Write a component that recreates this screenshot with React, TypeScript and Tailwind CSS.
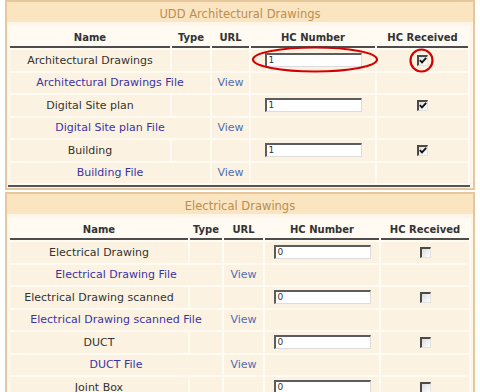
import React from "react"

interface DrawingRow {
  name: string
  file: string
  hc: string
  checked: boolean
}

const archRows: DrawingRow[] = [
  { name: "Architectural Drawings", file: "Architectural Drawings File", hc: "1", checked: true },
  { name: "Digital Site plan", file: "Digital Site plan File", hc: "1", checked: true },
  { name: "Building", file: "Building File", hc: "1", checked: true },
]

const elecRows: DrawingRow[] = [
  { name: "Electrical Drawing", file: "Electrical Drawing File", hc: "0", checked: false },
  { name: "Electrical Drawing scanned", file: "Electrical Drawing scanned File", hc: "0", checked: false },
  { name: "DUCT", file: "DUCT File", hc: "0", checked: false },
  { name: "Joint Box", file: "Joint Box File", hc: "0", checked: false },
]

function HcInput({ value }: { value: string }) {
  return (
    <div className="mx-auto w-[97px] h-[14px] bg-white border-t-2 border-l-2 border-r border-b border-t-[#5c5c5c] border-l-[#5c5c5c] border-r-[#dcdcdc] border-b-[#dcdcdc] text-[9px] leading-[11px] text-[#333] text-left pl-[2px]">
      {value}
    </div>
  )
}

function CheckBox({ checked }: { checked: boolean }) {
  return (
    <div className="mx-auto w-[11px] h-[11px] bg-gradient-to-br from-[#dcdcdc] to-white border-t-2 border-l-2 border-r border-b border-t-[#4a4a4a] border-l-[#4a4a4a] border-r-[#e2e2e2] border-b-[#e2e2e2] flex items-center justify-center">
      {checked && (
        <svg width="8" height="7" viewBox="0 0 8 7">
          <path d="M0.8 3.2 L3 5.4 L7.2 0.8" stroke="#111" strokeWidth="1.8" fill="none" />
        </svg>
      )}
    </div>
  )
}

function Panel({ title, rows, widths }: { title: string; rows: DrawingRow[]; widths: number[] }) {
  const th = "h-[20px] border-b-2 border-[#4d4d4d] font-bold text-[10px] text-[#333] text-center align-middle p-0"
  const td = "h-[20.5px] bg-[#fcf2e1] p-0 text-center align-middle"
  return (
    <div className="ml-[5px] w-[470px] border-2 border-[#e6c79c] bg-[#fdf5e8] pb-[1px]">
      <div className="h-[20px] bg-[#fbe4c0] pt-[6px] text-center text-[11.5px] leading-[12px] text-[#b98f55]">{title}</div>
      <table className="ml-[1px] mt-[4px] table-fixed border-separate border-spacing-[2px] bg-[#fffaf2] border-b-2 border-b-[#555] text-[11px] leading-[13px]" style={{ width: widths.reduce((a, b) => a + b, 0) + 12 }}>
        <colgroup>
          {widths.map((w, i) => (
            <col key={i} style={{ width: w }} />
          ))}
        </colgroup>
        <thead>
          <tr>
            <th className={th}>Name</th>
            <th className={th}>Type</th>
            <th className={th}>URL</th>
            <th className={th}>HC Number</th>
            <th className={th}>HC Received</th>
          </tr>
        </thead>
        <tbody>
          {rows.map((r) => (
            <React.Fragment key={r.name}>
              <tr>
                <td className={`${td} text-[#333]`}>{r.name}</td>
                <td className={td}></td>
                <td className={td}></td>
                <td className={td}>
                  <HcInput value={r.hc} />
                </td>
                <td className={td}>
                  <CheckBox checked={r.checked} />
                </td>
              </tr>
              <tr>
                <td colSpan={2} className={`${td} text-[#3b33a6]`}>{r.file}</td>
                <td className={`${td} text-[#4f6db3]`}>View</td>
                <td className={td}></td>
                <td className={td}></td>
              </tr>
            </React.Fragment>
          ))}
        </tbody>
      </table>
    </div>
  )
}

export default function App() {
  return (
    <div className="relative w-[480px] h-[392px] overflow-hidden bg-white font-['DejaVu_Sans',sans-serif]">
      <Panel title="UDD Architectural Drawings" rows={archRows} widths={[160, 38, 37, 124, 91]} />
      <div className="mt-[2px]">
        <Panel title="Electrical Drawings" rows={elecRows} widths={[178, 32, 39, 114, 88]} />
      </div>
      <svg className="absolute left-0 top-0 pointer-events-none" width="480" height="392">
        <ellipse cx="315" cy="59.5" rx="62" ry="12" stroke="#d40000" strokeWidth="2.2" fill="none" />
        <ellipse cx="421.5" cy="60.5" rx="11" ry="11" stroke="#d40000" strokeWidth="2.2" fill="none" />
      </svg>
    </div>
  )
}
